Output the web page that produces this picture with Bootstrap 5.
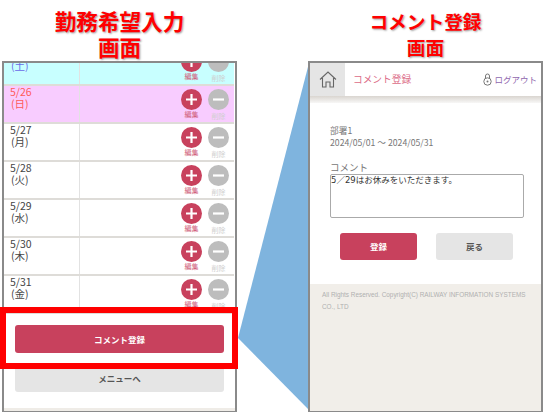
<!DOCTYPE html>
<html lang="ja">
<head>
<meta charset="utf-8">
<title>コメント登録</title>
<link href="https://cdn.jsdelivr.net/npm/bootstrap@5.3.0/dist/css/bootstrap.min.css" rel="stylesheet">
<style>
html,body{margin:0;background:#fff;overflow:hidden}
body{width:544px;height:413px;position:relative;font-family:"Noto Sans CJK JP","Noto Sans",sans-serif;color:#555}
.stage{display:flex;width:544px;height:413px;padding:0 1px 1px 2px;justify-content:space-between}
.pane{width:235px;display:flex;flex-direction:column}
.headline{height:61px;margin:0;padding-top:8px;text-align:center;font-size:21.6px;line-height:26px;font-weight:700;color:#f00;text-shadow:1px 1px 2px rgba(0,0,0,.4);white-space:nowrap;letter-spacing:0}
.headline.narrow{font-size:18.7px}
.phone{flex:1;border:2px solid #8a8a8a;border-bottom-width:1px;background:#fff;overflow:hidden;display:flex;flex-direction:column;position:relative;z-index:1}
.rows{margin:-15px 1px 0 0;flex:none}
.day{display:flex;height:38px;border-bottom:2px solid #dedcd8}
.day.sat{background:#c8ffff}.day.sun{background:#f8ccff}
.datecell{width:76px;border-right:1px solid #e2e2e2;font-size:10.5px;line-height:12px;padding:0 0 0 6px;color:#444}
.datecell span{display:block;padding-left:1px}
.sat .datecell{color:#6a6ae8}.sun .datecell{color:#ff5a5a}
.acts{flex:1;display:flex;justify-content:flex-end;gap:6px;padding:3px 5px 0 0}
.act{width:21px;text-align:center;font-size:7px;line-height:8px;color:#cfcfcf;white-space:nowrap}
.act.on{color:#d0607c}
.act svg{display:block}
.act.off b{display:block;font-weight:400;padding-top:2px}
.act b{font-weight:400}
.btnzone{padding:11px 11px 0 11px;display:flex;flex-direction:column;gap:11px}
.pill{height:28px;border-radius:3px;border:0;padding:0;font-size:8.5px;font-weight:700;line-height:28px;text-align:center;width:100%}
.pill.rose{background:#c8415d;color:#fff}
.pill.grey{background:#e5e5e5;color:#555;height:28px}
.baseline{margin-top:auto;height:3px;background:#efece7}
.bar{display:flex;align-items:center;height:33px;flex:none}
.homebox{width:35px;height:33px;background:#e5e5e5;display:flex;align-items:center;justify-content:center}
.bartitle{font-size:9.7px;color:#dc6c88;margin-left:8px}
.logout{margin-left:auto;margin-right:4px;font-size:8.5px;color:#8f66ae;display:flex;align-items:center;gap:2px}
.shade{height:7px;flex:none;background:linear-gradient(#d9d5d0,#f8f7f6)}
.formzone{flex:1;padding:22px 18px 0 20px;font-size:8.7px;line-height:12px;color:#777}
.formzone p{margin:0}
.formzone .lbl{margin-top:12px;margin-bottom:1px;font-size:9.5px;line-height:12px}
.memo{display:block;width:194px;height:44px;border:1px solid #aaa;border-radius:2px;padding:0;margin:0;font-family:"DejaVu Sans","Noto Sans CJK JP",sans-serif;font-size:8.5px;line-height:10px;color:#333;resize:none;background:#fff}
.pairs{display:flex;gap:19px;padding:15px 0 0 10px}
.pairs .pill{width:77px;height:27px;line-height:27px}
.foot{height:127px;flex:none;background:#f1eee9;padding:5px 8px 0 12px;font-family:"Liberation Sans",sans-serif;font-size:6.4px;line-height:12px;color:#b0b0b0}
.wedge{position:absolute;left:0;top:0;z-index:0}
.redbox{position:absolute;left:0;top:307px;width:238px;height:62px;border:6px solid #f00;z-index:2;pointer-events:none}
</style>
</head>
<body>
<svg class="wedge" width="544" height="413" aria-hidden="true"><polygon points="309,63 238,338 309,410" fill="#7fb4de"/></svg>
<div class="stage">
  <section class="pane">
    <h1 class="headline">勤務希望入力<br>画面</h1>
    <div class="phone">
      <div class="rows">
        <div class="day sat"><div class="datecell">5/25<span>(土)</span></div><div class="acts"><div class="act on"><svg width="21" height="21"><circle cx="10.5" cy="10.5" r="10.5" fill="#c8415d"/><path d="M10.5 5v11M5 10.5h11" stroke="#fff" stroke-width="2.2"/></svg>編集</div><div class="act off"><svg width="21" height="21"><circle cx="10.5" cy="10.5" r="10.5" fill="#bdbdbd"/><path d="M5 10.5h11" stroke="#fff" stroke-width="2.2"/></svg><b>削除</b></div></div></div>
        <div class="day sun"><div class="datecell">5/26<span>(日)</span></div><div class="acts"><div class="act on"><svg width="21" height="21"><circle cx="10.5" cy="10.5" r="10.5" fill="#c8415d"/><path d="M10.5 5v11M5 10.5h11" stroke="#fff" stroke-width="2.2"/></svg>編集</div><div class="act off"><svg width="21" height="21"><circle cx="10.5" cy="10.5" r="10.5" fill="#bdbdbd"/><path d="M5 10.5h11" stroke="#fff" stroke-width="2.2"/></svg><b>削除</b></div></div></div>
        <div class="day"><div class="datecell">5/27<span>(月)</span></div><div class="acts"><div class="act on"><svg width="21" height="21"><circle cx="10.5" cy="10.5" r="10.5" fill="#c8415d"/><path d="M10.5 5v11M5 10.5h11" stroke="#fff" stroke-width="2.2"/></svg>編集</div><div class="act off"><svg width="21" height="21"><circle cx="10.5" cy="10.5" r="10.5" fill="#bdbdbd"/><path d="M5 10.5h11" stroke="#fff" stroke-width="2.2"/></svg><b>削除</b></div></div></div>
        <div class="day"><div class="datecell">5/28<span>(火)</span></div><div class="acts"><div class="act on"><svg width="21" height="21"><circle cx="10.5" cy="10.5" r="10.5" fill="#c8415d"/><path d="M10.5 5v11M5 10.5h11" stroke="#fff" stroke-width="2.2"/></svg>編集</div><div class="act off"><svg width="21" height="21"><circle cx="10.5" cy="10.5" r="10.5" fill="#bdbdbd"/><path d="M5 10.5h11" stroke="#fff" stroke-width="2.2"/></svg><b>削除</b></div></div></div>
        <div class="day"><div class="datecell">5/29<span>(水)</span></div><div class="acts"><div class="act on"><svg width="21" height="21"><circle cx="10.5" cy="10.5" r="10.5" fill="#c8415d"/><path d="M10.5 5v11M5 10.5h11" stroke="#fff" stroke-width="2.2"/></svg>編集</div><div class="act off"><svg width="21" height="21"><circle cx="10.5" cy="10.5" r="10.5" fill="#bdbdbd"/><path d="M5 10.5h11" stroke="#fff" stroke-width="2.2"/></svg><b>削除</b></div></div></div>
        <div class="day"><div class="datecell">5/30<span>(木)</span></div><div class="acts"><div class="act on"><svg width="21" height="21"><circle cx="10.5" cy="10.5" r="10.5" fill="#c8415d"/><path d="M10.5 5v11M5 10.5h11" stroke="#fff" stroke-width="2.2"/></svg>編集</div><div class="act off"><svg width="21" height="21"><circle cx="10.5" cy="10.5" r="10.5" fill="#bdbdbd"/><path d="M5 10.5h11" stroke="#fff" stroke-width="2.2"/></svg><b>削除</b></div></div></div>
        <div class="day"><div class="datecell">5/31<span>(金)</span></div><div class="acts"><div class="act on"><svg width="21" height="21"><circle cx="10.5" cy="10.5" r="10.5" fill="#c8415d"/><path d="M10.5 5v11M5 10.5h11" stroke="#fff" stroke-width="2.2"/></svg>編集</div><div class="act off"><svg width="21" height="21"><circle cx="10.5" cy="10.5" r="10.5" fill="#bdbdbd"/><path d="M5 10.5h11" stroke="#fff" stroke-width="2.2"/></svg><b>削除</b></div></div></div>
      </div>
      <div class="btnzone">
        <button class="btn pill rose">コメント登録</button>
        <button class="btn pill grey">メニューへ</button>
      </div>
      <div class="baseline"></div>
    </div>
  </section>
  <section class="pane">
    <h1 class="headline narrow">コメント登録<br>画面</h1>
    <div class="phone">
      <div class="bar">
        <div class="homebox"><svg width="18" height="17" viewBox="0 0 18 17" fill="none" stroke="#666" stroke-width="1.1"><path d="M1 8.500 9 1l8 7.500M3.500 7v9h3.500v-5h4v5h3.500V7"/></svg></div>
        <div class="bartitle">コメント登録</div>
        <div class="logout"><svg width="9" height="13" viewBox="0 0 9 13" fill="none" stroke="#777"><path d="M2.500 5V3a2 2 0 0 1 4 0v2"/><circle cx="4.500" cy="8.500" r="3.700"/><circle cx="4.500" cy="8.500" r="1" fill="#777" stroke="none"/></svg>ログアウト</div>
      </div>
      <div class="shade"></div>
      <div class="formzone">
        <p>部署1</p>
        <p>2024/05/01 ～ 2024/05/31</p>
        <p class="lbl">コメント</p>
        <textarea class="memo">5／29はお休みをいただきます。</textarea>
        <div class="pairs">
          <button class="btn pill rose">登録</button>
          <button class="btn pill grey">戻る</button>
        </div>
      </div>
      <div class="foot">All Rights Reserved. Copyright(C) RAILWAY INFORMATION SYSTEMS CO., LTD</div>
    </div>
  </section>
</div>
<div class="redbox"></div>
</body>
</html>
